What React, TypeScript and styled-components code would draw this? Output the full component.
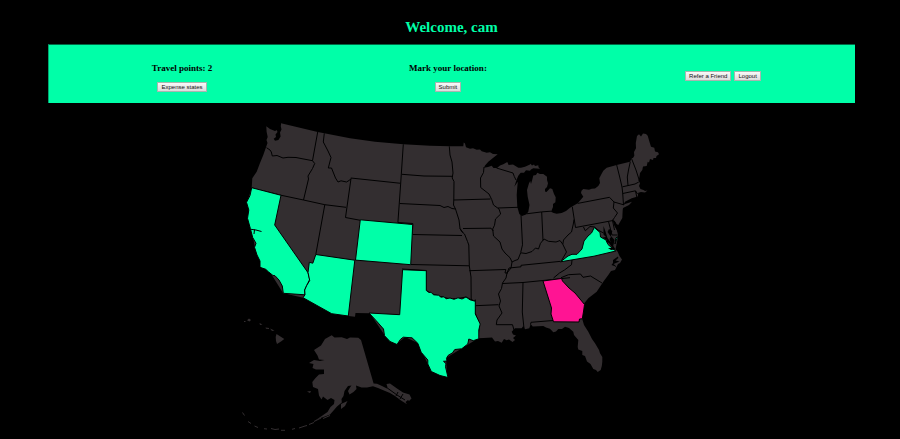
import React from "react";
import styled, { createGlobalStyle } from "styled-components";

const GlobalStyle = createGlobalStyle`
  body {
    margin: 0;
    background: #000;
    color: #000;
    font-family: "Liberation Serif", "Times New Roman", serif;
  }
`;

const Page = styled.main`
  padding: 18px 5% 0 48px;
`;

const Title = styled.h1`
  margin: 0 0 7px;
  color: #00ffa8;
  font-size: 15px;
  line-height: 19px;
  text-align: center;
`;

const Panel = styled.section`
  display: grid;
  grid-template-columns: 33fr 33fr 34fr;
  align-items: center;
  min-height: 58px;
  border-top: 1px solid #006b47;
  border-left: 1px solid #00a870;
  background: #00ffa8;
`;

const PanelCell = styled.div<{ $inset?: boolean }>`
  display: flex;
  flex-direction: column;
  align-items: center;
  gap: 9px;
  padding: ${(p) => (p.$inset ? "4px 0 0 10px" : "6px 0 0")};
`;

const CellTitle = styled.h3`
  margin: 0;
  font-size: 9px;
  line-height: 10px;
`;

const ButtonRow = styled.div`
  display: flex;
  gap: 3px;
`;

const Button = styled.button`
  box-sizing: border-box;
  height: 10px;
  padding: 0 3px;
  border: 1px solid #a9b5b0;
  border-radius: 0;
  background: linear-gradient(#f8f8f8, #dcdcdc);
  color: #111;
  font-family: "Liberation Sans", Arial, sans-serif;
  font-size: 6px;
  line-height: 8px;
  white-space: nowrap;
`;

const MapArea = styled.figure`
  display: flex;
  justify-content: center;
  margin: 15px 0 0;
`;

const MapDrawing = styled.svg`
  display: block;
  width: 100%;
  max-width: 424px;
  height: auto;
`;

const Land = styled.path`
  fill: #332e30;
`;

const Water = styled.path`
  fill: #000;
`;

const Border = styled.path`
  fill: none;
  stroke: #000;
  stroke-width: 1;
  stroke-linejoin: round;
`;

const IslandChain = styled.path`
  fill: none;
  stroke: #332e30;
  stroke-width: 1;
`;

const State = styled.path<{ $current?: boolean }>`
  fill: ${(p) => (p.$current ? "#ff1493" : "#00ffa8")};
  stroke: #000;
  stroke-width: 1;
  stroke-linejoin: round;
`;

const MAINLAND = `M281 123.3L317.7 132 324.3 133.3 350 138.3 375 141.7 403.3 144.3 430 145.8 449.3 146.3
463.3 146.3 463.7 142.5 465 143.5 466 147.3 470 148.7 473 148.2 476.7 149.7 480 149.4 481.7 151.3 486.7 152.7 490 152.2 493 154 497.7 154.3
493.3 157.7 488.3 161.7 485 165.5 484 167.8 488 167 491.7 165.7 493.5 168 497 168 500 165.5 503.3 164.3 507.3 162 508.6 165 513 164.5 518.3 167.7
521 167.8 525 166.7 530 164.5 530.6 163.7 532 165.4 534 164.5 535 166 538.3 165.3 538.5 167.3 540 168.7 533.3 168.3 531 169.5 530 170.7 526 170.3 524 172.8 520.7 172.7 518.3 175.7 516.5 180 514.3 186.7
517.8 181.7 517.3 187 516.7 195 517.3 206.7 519.3 214 522 216 526 214.5 528.3 211.7 529.5 205 527.7 196.7 527 190 529 183.3 530.2 181 531 184 532.2 180 533.3 175.5 536 175 537.3 172.7
540 174 543.3 174 547 176.7 547 180 548 183.3 547 187 545 189 545 191.5 546.5 192 550 188.3 552.3 189 554 194 555.7 197.3 555.4 202.3 553 204 553 207 551 211.7
553.7 213 556.7 213.7 561.7 213 566 211 570 207.7 577.7 203.3 580.5 200 583.3 196.7 581 193 581.5 190.7 583.3 189 589 189.8 591.7 188.7 595 188.5 598.3 186 600 183 599.3 178.3 601.5 174 603.3 170.7 606.7 167.7
616.7 165 630 161.7 631.7 158.3 633 158 634.3 155.7 634 152 636 148.3 635.8 143 637 136 639 134.3 641 136.4 643 133.5 646 134 647.7 135.7 649.5 142 651 146.7 654.3 147.7 655 151.4 658 152.3 659 154.3 656.5 156 656 158 653.5 158 653 160 650 159
649 162.5 647.7 161.7 646.7 166 643 166.5 642.3 170 640 173 639.3 177.5 638.5 180.5 640 183.3 639 186 640.5 189 643.5 190 645 191 647.5 190.5 645 192.4 641 192 638.3 192.7 637.7 196.5 631.7 198.3 625 201.7 623.5 205
622.7 210 622.3 218 620 222 618.3 225 616.5 224 614.5 220.8 613 221 614.5 225 616.5 229 617.7 233.5 618 237 616.8 243 615.5 249.3 617.7 251.7 619.5 256 622 259.5 620 263 618 264 615 270 611 271 608.3 275 603.3 281.7 596.7 291.7 592.5 295 588.3 298.3
584.3 303.3 583.8 308 582.3 313.3 582.3 319.3 584 325 588.3 331.7 592 339 595 343.3 599 350 600 353.3 602.3 357 602.3 361.7 601.8 366 600.7 370 597.7 372 596 370 593.3 369 590.5 364 587 361.5 585 356 582.3 355 582.3 351 578.3 349.5 577.7 347 578.3 340 574 335 573.3 331.7 569 328 565 326.7 562 329 558.3 329 556 331.5 553.3 332.3
550 328.8 546 327.5 543.3 326 532.7 326.5 530.7 324 529.3 328.3 525 329.3 523.3 326 521.7 328.3 515 328.3 511.7 331.7 513 334.5 516 335.5 513 338 515 340 512.5 342 509 339.5 506.7 340.3 504 339 501.7 342.7 498 341 495 341.5 492 337.5 488 337.7 483.3 338 478.3 338.3
L446 358 447.3 376.7 431 371 418.3 343.3 405 337 397 343.7 385 335.7 370 313.3 355.5 313 355 316.7 348.3 316 303 297.7 283 293 255 248 247 202.3 251.7 188 252.3 178.3 256.7 171.7 260 163 263.3 155 266 147.3 267.5 143 266.5 140 267.7 137 266.6 131.7 266.3 126.3
270 129 275 131 277 130 279.5 127 281 125Z`;

const WATER = `M279 126L276.6 129.5 277.5 132 275.5 134.5 276 137 273.7 138.8 275 140.7 278.4 140 280.6 136.5 280 132.5 281.5 129.5 280.3 124Z
M603.5 226L605.5 231.5 607.5 238 612 244 615.5 249.5 611 250 608 248 612.5 248 609 243 606 242 607 240 602.7 237.5 606 237 603.5 234.5Z
M609 229L612.3 231 611 236 614.5 240 612.8 248 609.5 239 611 237 607.5 232Z
M612.5 219L614.5 226 618 232 616 223Z
M613 260L618 256.5 618.3 258 615.5 260.5 619.5 261.5 613.5 264 617 267 611.5 265 613 263Z`;

const BORDERS = `M317.7 132L312.5 160.7
M266.5 147.7L270 150 271.3 152 272.3 156 277 155.5 283 158 288 157.3 296 157.5 302 158.7 312.5 160.7 314.7 163.5 312.5 168.5 308 176 308.5 179 303.5 200
M251.7 188L280.8 195.2 303.5 200 324.8 204.7 346 207.3
M324.8 204.7L315.8 254.5
M324.3 133.3L323.3 142 328 151 331 157.5 328.3 168 331.5 168 335.5 178 338 182 341 180.8 346.5 182 349.8 180 351 178.7
M350.8 178L400.7 183.3 M351 178.5L345.5 217.5 360.3 220.3
M403.3 144.3L400.7 183.3 397.9 222.5
M402 174.3L424 176 452.8 176.3
M399.8 203.5L440 205.5 444 207.5 448 206.5 452 208.5 455.5 209
M449.3 146.3L450 155 452 162 453 173 452.2 178 454 181.5 453.8 200 453.5 205 455.5 209 459 220 460 228.5 463 232.5
M453.8 200L490.5 199
M484 167L483.5 172.5 480.5 178 480.7 187.5 489 194 491.7 199.5 493.5 205 499 209 500.7 214 495.5 219 494.5 225.3 492.7 229 493.5 236 500 242 502 249 505 253 510 257.7 512 262 511 268
M498 208L518 207.3
M496.5 168L513 173 514.3 176.5 516 180
M521 214.8L522.5 244.8 520.7 252.5
M526.5 213.8L541.7 211.9 551 211.2 M541.7 212L543 240.5
M463 228.5L491 228.2 493.3 231
M397.9 222.5L412.8 223.5 412.4 234.5 462 235.5
M460 228.5L461.5 231.5 464.5 234 467.5 241.5 468.8 245 469.3 265.8
M411 264.5L469.3 265.8 M469.3 270.7L505.8 269.5 505 273 508 273
M402 269L426.3 270.5 426.3 290.5 431 293.3 438.5 296 443 297 450 299 458 298.5 466 297 474.5 301.5
M469.3 265.8L471 277 471.2 299.5 475.3 301.3
M475.3 305.7L498.5 304.7 M475.3 299.5L475.5 314 479.5 324 478 338
M511 268L507 273 506 278 502.5 283 501.5 288.5 498.5 294 500.5 301 499 306 502 313 497 320 496.3 324.7 512.5 324.7 514.3 331
M502.5 283.5L523 282.5 543 280.5 570 277.7
M523 282.5L522.3 312 524 328.5
M530.5 324.5L531 322.3 553 320.5
M507 273L509 268 521 266.8 521 265.3 560 261.4
M512 262L515 260.5 518 259.5 520.7 252.8 526 253.5 532 251.5 535.5 248 538.5 249 540.5 243.3 544 239 548.5 241.3 556 242 560 240.5 562.8 244.3 566.5 252 561 261.5
M562.8 244.3L563.5 240 568 235 571.5 232 573.3 224 574 219.5
M572.3 206.8L575.5 227.5
M575.5 227.5L613 220.5 M577.7 203.4L609.5 197.3 614 202
M616.7 165L619.7 177 622 187 622.7 193 623.5 205
M614 202L613.3 208 617.5 213 614.5 217.5 612.5 220.5 614.5 230
M614 202L623.3 204.7 M622.5 186.8L635 184 638.8 182
M630.3 161.7L628.5 170 627.3 177 628 185.5
M631.5 158.5L636 170 639.5 181
M622.7 193.5L635.5 190.8 637.5 194 M635.5 191L637 198
M583.5 227L585.3 230.8 590 226.5 594.5 227 598 230 603.5 233 M608.5 221.5L612 235 617.5 235
M553.5 278L559.5 273 564.5 270 571.5 264.7 572 260
M561 277.7L568.5 274.7 580.5 274 583 277.3 590.5 276 602 283`;

const CALIFORNIA = `M251.7 187.7L281 195.3 274.7 225 308 272.7 309.7 279.5 306.7 285.5 304.7 290 305 294.8 283.3 293.3 282.3 286 279 280 275 275.7 273 275.5 268.3 271.7 265.7 269.3 260 267.3 260 261 257 255 254.5 247.3 256 243.3 252.7 237.5 250.3 228.3 247.5 218.3 248.8 210 246.5 202.3 250 195.5Z`;
const SAN_FRANCISCO_BAY = `M251 229.3L256 230 261.5 231.5M254.5 229.5L254 234`;
const ARIZONA = `M315.8 254.5L354.8 260.2 348.3 316 331.7 313.7 303 297.7 305 294.8 304.7 290 306.7 285.5 309.7 280.5 308 272.5 309.3 262.3 312.8 263.2Z`;
const COLORADO = `M360.3 219.8L412.7 224.5 410.7 264.7 355.5 260.1Z`;
const TEXAS = `M402.6 269.7L426.3 270.7 426.3 290.5 429 292.5 431 292.2 433.5 294.8 438.5 295.2 441 297.2 444 296.8 446 298.8 450 298 454 299.3 458 297.8 462 299 466 297 470 299.8 475.3 301.3 475.3 314 480.2 324 478.8 330 478.8 338.8 473.3 340.7 468.8 339 467.8 344 461.7 348.8 454.8 349.5 452.5 352.8 448 355.5 446.5 358.3 447 361 443.5 361.3 446 363.7 445.5 366.7 448 377.5 440 375.5 431.3 371.5 427.8 364 427.8 360 421.2 352.3 417.8 343.3 412 337.8 403.3 337.2 400.5 339.3 397 344.5 390 341.5 384.5 335.7 383.5 329 376.2 320.7 369 313 399.7 314.7Z`;
const VIRGINIA = `M560.5 261.8L568 256 572 254.3 577 254.3 582 249 584 241 588 236 591.5 233 594.3 227.5 600 232.5 600.5 237 606 240 608 244.5 612.5 248.5 615.8 251 594 256.2Z M615.8 238L617.6 236.7 615 244Z`;
const GEORGIA = `M543 281L561.5 278.5 562.5 281 569 288 575 293 580 299 584.5 304.5 583.6 311 582.3 318.8 579.5 319 579 322 553.5 321.8 551 314 551.5 308Z`;

const ALASKA = `M331.7 335.2L334.5 337.5 341.7 337.3 347 339 350 337.5 358.3 337.7 361 340 373.6 383.5 377 383.8 382 386 388 389 386.5 384 390 383.5 397 388.5 403 392.5 409.5 394.5 411.5 398.5 409 401 408 400 405.5 402 407 404.3 401 400.5 395 396 390 393 384.5 390.8 378 388 373 386.3 367 387.5 361.5 387.5 356 385.5 356.5 389 353.5 392 349.5 394.5 348 391 350 387.5 351.5 385.5 348 386 344.5 391 343.5 396 341.5 399 341.8 402.5 337 406.5 334 410 330 414.5 325.5 416.3 319 418.5 314 421.3 321 416.5 327.5 412 330.5 407 334 404 334.5 400 331 398 327.5 400 323 396.5 321.5 399.5 319 395.5 318 389 313 387 312.3 382 315.5 378 319 374.5 324 374 324 369.5 316 369.5 312.5 368 313.5 364 309 363 314 360 320 361 324.5 360 319 359.5 317.5 355.5 314 350 321 345.5 325 339Z
M341 404L347.5 401 345 406 341 409Z M307 391.5L311 391 310 393Z M319.5 389.5L322 388 322 392Z`;
const HAWAII = `M276.5 334L284.3 339 281 341.5 277 344 276 341 275.7 337Z M247 320.3L249 318.5 251 320 249.5 321.5Z M259.5 323L262.5 324.5 260 325Z M265.5 327.5L269 328 269 329 266 328.8Z M270 328.5L274.5 330.5 272 331Z M244 321H245.5V322H244Z`;
const ALEUTIANS = `M242.5 412.5L244.5 415.5M248 421.5L251 423.5M254.5 426L258 427.5M264 428.7L267 429M271 428.5L275 429.5 279 429M281 430.3H285M292 429.3L295 428.5M299 428L305 426 307 425.5M309 424.5L314 422.5M314 421.5L321 418M323 418.5L330 415.5`;
const PANHANDLE_CHANNELS = `M388 388.5L397 395 405 400M398 392L396 396M403 394L400 399`;
const LONG_ISLAND = `M621.5 207L625 204 632 201.8 629 205 623 208Z`;

export default function App() {
  return (
    <>
      <GlobalStyle />
      <Page>
        <Title>Welcome, cam</Title>
        <Panel>
          <PanelCell>
            <CellTitle>Travel points: 2</CellTitle>
            <Button type="button">Expense states</Button>
          </PanelCell>
          <PanelCell>
            <CellTitle>Mark your location:</CellTitle>
            <Button type="submit">Submit</Button>
          </PanelCell>
          <PanelCell $inset>
            <ButtonRow>
              <Button type="button">Refer a Friend</Button>
              <Button type="button">Logout</Button>
            </ButtonRow>
          </PanelCell>
        </Panel>
        <MapArea>
          <MapDrawing viewBox="240 118 424 316" role="img" aria-label="Map of the United States">
            <Land d={MAINLAND} />
            <Land d={LONG_ISLAND} />
            <Border d={BORDERS} />
            <State d={CALIFORNIA} />
            <State d={ARIZONA} />
            <State d={COLORADO} />
            <State d={TEXAS} />
            <State d={VIRGINIA} />
            <State d={GEORGIA} $current />
            <Water d={WATER} />
            <Border d={SAN_FRANCISCO_BAY} />
            <Land d={ALASKA} />
            <Land d={HAWAII} />
            <Border d={PANHANDLE_CHANNELS} />
            <IslandChain d={ALEUTIANS} />
          </MapDrawing>
        </MapArea>
      </Page>
    </>
  );
}
